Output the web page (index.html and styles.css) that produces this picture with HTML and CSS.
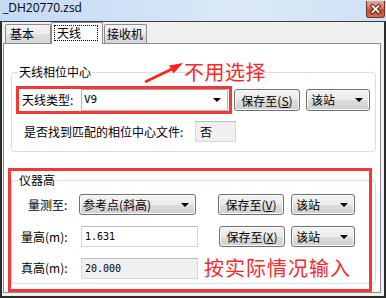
FILE: index.html
```html
<!DOCTYPE html>
<html lang="zh-CN">
<head>
    <meta charset="UTF-8">
    <meta name="viewport" content="width=device-width, initial-scale=1.0">
    <title>_DH20770.zsd</title>
    <link rel="stylesheet" href="styles.css">
</head>
<body>

    <div class="window">
        <!-- Title bar -->
        <div class="titlebar">
            <span class="title">_DH20770.zsd</span>
            <span class="close-btn">
                <svg width="19" height="17" viewBox="0 0 19 17">
                    <path d="M6 4.5 L13 11.5 M13 4.5 L6 11.5" stroke="#4a1a10" stroke-width="4" stroke-linecap="square"/>
                    <path d="M6 4.5 L13 11.5 M13 4.5 L6 11.5" stroke="#ffffff" stroke-width="2" stroke-linecap="square"/>
                </svg>
            </span>
        </div>

        <div class="frame">
            <!-- Tabs -->
            <div class="tabs">
                <div class="tab tab-basic">基本</div>
                <div class="tab tab-active"><span class="focus">天线</span></div>
                <div class="tab tab-receiver">接收机</div>
            </div>

            <div class="panel">
                <!-- Antenna phase center -->
                <fieldset class="group group-antenna">
                    <legend>天线相位中心</legend>
                    <div class="row">
                        <div class="mark-box">
                            <span class="label label-type">天线类型:</span>
                            <div class="combo combo-edit combo-type">V9<i class="arrow"></i></div>
                        </div>
                        <button type="button" class="btn btn-first">保存至(<u>S</u>)</button>
                        <div class="combo combo-list combo-site combo-site-first">该站<i class="arrow"></i></div>
                    </div>
                    <div class="row row-found">
                        <span class="label label-found">是否找到匹配的相位中心文件:</span>
                        <div class="textbox readonly box-found">否</div>
                    </div>
                </fieldset>

                <!-- Instrument height -->
                <fieldset class="group group-height">
                    <legend>仪器高</legend>
                    <div class="row row-h">
                        <span class="label label-measure">量测至:</span>
                        <div class="combo combo-list combo-ref">参考点(斜高)<i class="arrow"></i></div>
                        <button type="button" class="btn btn-v">保存至(<u>V</u>)</button>
                        <div class="combo combo-list combo-site combo-site-v">该站<i class="arrow"></i></div>
                    </div>
                    <div class="row row-h row-gap">
                        <span class="label label-h">量高(m):</span>
                        <div class="textbox box-h">1.631</div>
                        <button type="button" class="btn btn-x">保存至(<u>X</u>)</button>
                        <div class="combo combo-list combo-site combo-site-x">该站<i class="arrow"></i></div>
                    </div>
                    <div class="row row-h row-gap2">
                        <span class="label label-h">真高(m):</span>
                        <div class="textbox readonly box-h">20.000</div>
                        <span class="note note-input">按实际情况输入</span>
                    </div>
                </fieldset>

                <!-- Annotations drawn over the dialog -->
                <svg class="note-arrow" width="45" height="28" viewBox="0 0 45 28">
                    <line x1="4" y1="24" x2="32" y2="10.5" stroke="#f22" stroke-width="2.5"/>
                    <polygon points="42,5 28,7.5 32.5,15.5" fill="#f22"/>
                </svg>
                <span class="note note-choose">不用选择</span>
                <div class="mark-frame"></div>
            </div>
        </div>
    </div>

</body>
</html>
```

FILE: styles.css
```css
/* Basic Styles */
body {
    margin: 0;
    padding: 0;
    background-color: #ffffff;
    font-family: 'Noto Sans CJK SC', 'Liberation Sans', sans-serif;
    font-size: 12px;
    line-height: 14px;
    color: #000000;
}

.window {
    width: 386px;
    height: 298px;
    display: flex;
    flex-direction: column;
    background-color: #f0f0f0;
}

/* Title bar */
.titlebar {
    height: 21px;
    flex: none;
    display: flex;
    justify-content: space-between;
    align-items: flex-start;
    background: linear-gradient(to right, #c4dbf4 0%, #d3e4f7 45%, #dceaf8 60%, #cfe1f5 100%);
}

.title {
    font-family: 'Open Sans', 'Liberation Sans', sans-serif;
    font-size: 12px;
    line-height: 16px;
    padding-left: 3px;
}

.close-btn {
    width: 19px;
    height: 17px;
    margin: 1px 1px 0 0;
    border: 1px solid #6d3426;
    border-top: none;
    border-radius: 0 0 3px 3px;
    background: linear-gradient(#e9a898 0%, #d8775e 45%, #c24a2d 55%, #d46f50 100%);
    box-sizing: border-box;
    display: flex;
}

/* Window frame */
.frame {
    flex: 1;
    display: flex;
    flex-direction: column;
    border: 2px solid #2b2b2b;
    border-top: 1px solid #3a3a3a;
}

.tabs {
    height: 21px;
    flex: none;
    display: flex;
    align-items: flex-end;
    padding-left: 3px;
}

.tab {
    height: 19px;
    box-sizing: border-box;
    border: 1px solid #898c95;
    border-bottom: none;
    border-radius: 2px 2px 0 0;
    background: linear-gradient(#f3f3f3 0%, #ebebeb 50%, #dedede 51%, #d6d6d6 100%);
    line-height: 17px;
}

.tab-basic {
    width: 46px;
    padding-left: 4px;
}

.tab-active {
    width: 52px;
    height: 22px;
    margin-bottom: -1px;
    background: #ffffff;
    position: relative;
    z-index: 1;
    padding: 2px 0 0 2px;
}

.focus {
    display: block;
    width: 44px;
    height: 16px;
    box-sizing: border-box;
    border: 1px dotted #000000;
    padding-left: 2px;
    line-height: 14px;
}

.tab-receiver {
    width: 43px;
    margin-left: 1px;
    padding-left: 2px;
}

.panel {
    flex: 1;
    position: relative;
    margin: 0 3px 3px 1px;
    background-color: #ffffff;
    border: 1px solid #898c95;
    padding: 21px 4px 0 7px;
}

/* Group boxes */
.group {
    margin: 0;
    padding: 7px 4px 9px 4px;
    border: 1px solid #d5dfe5;
    border-radius: 3px;
    min-width: 0;
}

.group legend {
    margin-left: 2px;
    padding: 0 1px;
    line-height: 14px;
}

.group-height {
    margin-top: 21px;
    padding-top: 7px;
    padding-bottom: 4px;
}

.row {
    display: flex;
    align-items: center;
}

.label {
    white-space: nowrap;
    flex: none;
}

/* Red marker round the antenna type */
.mark-box {
    display: flex;
    align-items: center;
    width: 216px;
    height: 28px;
    box-sizing: border-box;
    border: 3px solid #f43838;
}

.label-type {
    width: 59px;
    padding-left: 3px;
}

/* Combo boxes */
.combo {
    position: relative;
    box-sizing: border-box;
    flex: none;
    padding-left: 4px;
    line-height: 19px;
}

.combo-edit {
    height: 22px;
    border: 1px solid #b5b8bf;
    border-top-color: #a4a7ae;
    background-color: #ffffff;
}

.combo-type {
    width: 147px;
    margin-right: 1px;
    padding-left: 2px;
    font-family: 'DejaVu Sans Mono', monospace;
    font-size: 11px;
    line-height: 20px;
}

.combo-list {
    height: 21px;
    border: 1px solid #707070;
    border-radius: 3px;
    background: linear-gradient(#f2f2f2 0%, #ebebeb 50%, #dddddd 51%, #cfcfcf 100%);
    box-shadow: inset 0 0 0 1px #fbfbfb;
}

.arrow {
    position: absolute;
    right: 6px;
    top: 8px;
    width: 0;
    height: 0;
    border-left: 4px solid transparent;
    border-right: 4px solid transparent;
    border-top: 4px solid #000000;
}

.combo-site {
    width: 64px;
}

.combo-site-first {
    height: 22px;
    margin-left: 6px;
}

.combo-ref {
    width: 117px;
    padding-left: 3px;
}

.combo-site-v {
    margin-left: 7px;
}

.combo-site-x {
    margin-left: 6px;
}

/* Buttons */
.btn {
    flex: none;
    width: 66px;
    height: 21px;
    padding: 0;
    font-family: inherit;
    font-size: 12px;
    color: #000000;
    border: 1px solid #707070;
    border-radius: 3px;
    background: linear-gradient(#f2f2f2 0%, #ebebeb 50%, #dddddd 51%, #cfcfcf 100%);
    box-shadow: inset 0 0 0 1px #fbfbfb;
}

.btn-first {
    height: 22px;
    margin-left: 2px;
}

.btn-v {
    margin-left: 22px;
}

.btn-x {
    margin-left: 21px;
}

/* Text boxes */
.textbox {
    flex: none;
    height: 21px;
    box-sizing: border-box;
    border: 1px solid #d3d6dc;
    border-top-color: #b9bcc3;
    background-color: #ffffff;
    padding-left: 3px;
    line-height: 19px;
}

.readonly {
    background-color: #f0f0f0;
}

.row-found {
    margin-top: 7px;
}

.label-found {
    width: 171px;
    margin-left: 8px;
}

.box-found {
    width: 41px;
    padding-left: 4px;
}

.label-measure {
    width: 55px;
    margin-left: 8px;
    padding-left: 4px;
    box-sizing: border-box;
}

.label-h {
    width: 64px;
    margin-left: 1px;
    padding-left: 4px;
    box-sizing: border-box;
}

.box-h {
    width: 117px;
    font-family: 'DejaVu Sans Mono', monospace;
    font-size: 10px;
}

.row-gap {
    margin-top: 11px;
}

.row-gap2 {
    margin-top: 10px;
}

/* Red notes */
.note {
    color: #f52a2a;
    font-size: 20px;
    line-height: 22px;
    letter-spacing: 1px;
    white-space: nowrap;
}

.note-input {
    margin-left: 6px;
}

.note-choose {
    position: absolute;
    left: 180px;
    top: 17px;
    letter-spacing: 0.5px;
}

.note-arrow {
    position: absolute;
    left: 137px;
    top: 14px;
}

.mark-frame {
    position: absolute;
    left: 4px;
    top: 124px;
    width: 364px;
    height: 124px;
    box-sizing: border-box;
    border: 3px solid #f43838;
}
```
